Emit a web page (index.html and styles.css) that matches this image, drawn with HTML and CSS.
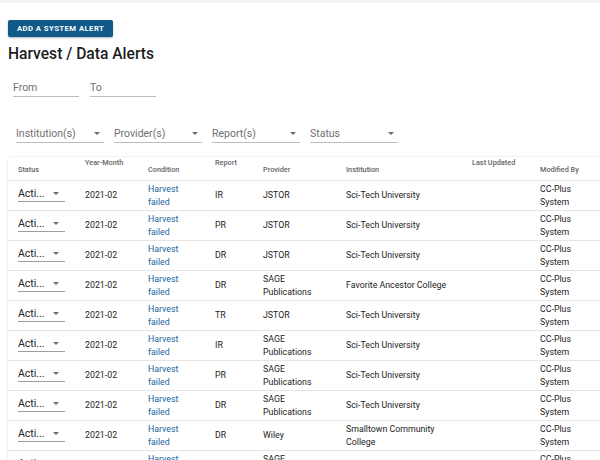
FILE: index.html
```html
<!DOCTYPE html>
<html>
<head>
<meta charset="utf-8">
<link rel="stylesheet" href="styles.css">
</head>
<body>
<div class="topbar"></div>
<main class="page">
  <button class="btn">Add a system alert</button>
  <h1 class="title">Harvest / Data Alerts</h1>
  <div class="dates">
    <div class="field date"><span class="label">From</span></div>
    <div class="field date"><span class="label">To</span></div>
  </div>
  <div class="filters">
    <div class="field sel"><span class="label">Institution(s)</span><span class="caret"></span></div>
    <div class="field sel"><span class="label">Provider(s)</span><span class="caret"></span></div>
    <div class="field sel"><span class="label">Report(s)</span><span class="caret"></span></div>
    <div class="field sel"><span class="label">Status</span><span class="caret"></span></div>
  </div>
  <div class="card">
    <table class="grid">
      <colgroup>
        <col class="c-status"><col class="c-ym"><col class="c-cond"><col class="c-rep"><col class="c-prov"><col class="c-inst"><col class="c-upd"><col class="c-mod">
      </colgroup>
      <thead>
        <tr>
          <th>Status</th><th class="raised">Year-Month</th><th>Condition</th><th class="raised">Report</th><th>Provider</th><th>Institution</th><th class="raised">Last Updated</th><th>Modified By</th>
        </tr>
      </thead>
      <tbody>
        <tr><td><div class="cellsel"><span>Acti...</span><span class="caret"></span></div></td><td>2021-02</td><td><a class="link">Harvest failed</a></td><td>IR</td><td>JSTOR</td><td>Sci-Tech University</td><td></td><td>CC-Plus System</td></tr>
        <tr><td><div class="cellsel"><span>Acti...</span><span class="caret"></span></div></td><td>2021-02</td><td><a class="link">Harvest failed</a></td><td>PR</td><td>JSTOR</td><td>Sci-Tech University</td><td></td><td>CC-Plus System</td></tr>
        <tr><td><div class="cellsel"><span>Acti...</span><span class="caret"></span></div></td><td>2021-02</td><td><a class="link">Harvest failed</a></td><td>DR</td><td>JSTOR</td><td>Sci-Tech University</td><td></td><td>CC-Plus System</td></tr>
        <tr><td><div class="cellsel"><span>Acti...</span><span class="caret"></span></div></td><td>2021-02</td><td><a class="link">Harvest failed</a></td><td>DR</td><td>SAGE Publications</td><td>Favorite Ancestor College</td><td></td><td>CC-Plus System</td></tr>
        <tr><td><div class="cellsel"><span>Acti...</span><span class="caret"></span></div></td><td>2021-02</td><td><a class="link">Harvest failed</a></td><td>TR</td><td>JSTOR</td><td>Sci-Tech University</td><td></td><td>CC-Plus System</td></tr>
        <tr><td><div class="cellsel"><span>Acti...</span><span class="caret"></span></div></td><td>2021-02</td><td><a class="link">Harvest failed</a></td><td>IR</td><td>SAGE Publications</td><td>Sci-Tech University</td><td></td><td>CC-Plus System</td></tr>
        <tr><td><div class="cellsel"><span>Acti...</span><span class="caret"></span></div></td><td>2021-02</td><td><a class="link">Harvest failed</a></td><td>PR</td><td>SAGE Publications</td><td>Sci-Tech University</td><td></td><td>CC-Plus System</td></tr>
        <tr><td><div class="cellsel"><span>Acti...</span><span class="caret"></span></div></td><td>2021-02</td><td><a class="link">Harvest failed</a></td><td>DR</td><td>SAGE Publications</td><td>Sci-Tech University</td><td></td><td>CC-Plus System</td></tr>
        <tr><td><div class="cellsel"><span>Acti...</span><span class="caret"></span></div></td><td>2021-02</td><td><a class="link">Harvest failed</a></td><td>DR</td><td>Wiley</td><td>Smalltown Community College</td><td></td><td>CC-Plus System</td></tr>
        <tr><td><div class="cellsel"><span>Acti...</span><span class="caret"></span></div></td><td>2021-02</td><td><a class="link">Harvest failed</a></td><td>DR</td><td>SAGE Publications</td><td>Sci-Tech University</td><td></td><td>CC-Plus System</td></tr>
      </tbody>
    </table>
  </div>
</main>
</body>
</html>
```
FILE: styles.css
```css
html, body {
  margin: 0;
  padding: 0;
  overflow: hidden;
  background: #fff;
  font-family: Roboto, "Liberation Sans", sans-serif;
  color: rgba(0,0,0,0.87);
}
.topbar {
  height: 3px;
  background: #f4f5f8;
}
.page {
  padding: 17px 8px 0 8px;
  width: 640px;
}
.btn {
  display: block;
  height: 17px;
  padding: 0 9px;
  border: none;
  border-radius: 2px;
  background: #0f5a89;
  color: #fff;
  font-family: Roboto, "Liberation Sans", sans-serif;
  font-weight: 700;
  font-size: 7.7px;
  letter-spacing: 0.45px;
  text-transform: uppercase;
  box-shadow: 0 1px 2px rgba(0,0,0,0.3);
}
.title {
  margin: 6px 0 0 0;
  font-size: 15.6px;
  font-weight: 500;
  line-height: 22px;
  color: #1d1d1d;
}
.dates {
  display: flex;
  gap: 11px;
  padding-left: 5px;
  margin-top: 13px;
}
.field {
  display: flex;
  align-items: center;
  height: 18px;
  border-bottom: 1px solid #bdbdbd;
  font-size: 10.5px;
  color: #707070;
}
.date { width: 66px; }
.filters {
  display: flex;
  gap: 10px;
  padding-left: 8px;
  margin-top: 27px;
}
.sel {
  width: 88px;
  justify-content: space-between;
}
.sel .caret { margin-right: 4px; }
.caret {
  width: 0;
  height: 0;
  border-left: 3px solid transparent;
  border-right: 3px solid transparent;
  border-top: 3px solid #6e6e6e;
}
.card {
  margin-top: 14px;
  border-radius: 3px;
  box-shadow: 0 0 2px rgba(0,0,0,0.18);
  width: 640px;
}
.grid {
  border-collapse: collapse;
  table-layout: fixed;
  width: 640px;
}
.c-status { width: 67px; }
.c-ym { width: 63px; }
.c-cond { width: 67px; }
.c-rep { width: 48px; }
.c-prov { width: 83px; }
.c-inst { width: 126px; }
.c-upd { width: 68px; }
.c-mod { width: 118px; }
.grid th {
  height: 21px;
  padding: 0 10px;
  text-align: left;
  font-size: 7.3px;
  font-weight: 500;
  color: #666;
  border-bottom: 1px solid #e4e4e4;
  vertical-align: middle;
  padding-top: 2px;
}
.grid th.raised {
  vertical-align: top;
  padding-top: 1px;
}
.grid td {
  height: 29px;
  padding: 0 10px;
  font-size: 8.8px;
  line-height: 13px;
  color: #222;
  border-bottom: 1px solid #e4e4e4;
  vertical-align: middle;
}
.grid td:last-child { padding-right: 60px; }
.link {
  color: #1b64a0;
  display: block;
  width: 32px;
}
.cellsel {
  display: flex;
  align-items: center;
  justify-content: space-between;
  width: 47px;
  height: 15px;
  margin-bottom: 4px;
  border-bottom: 1px solid #9e9e9e;
  font-size: 10.5px;
  color: #222;
}
.cellsel .caret { margin-right: 6px; }
```
